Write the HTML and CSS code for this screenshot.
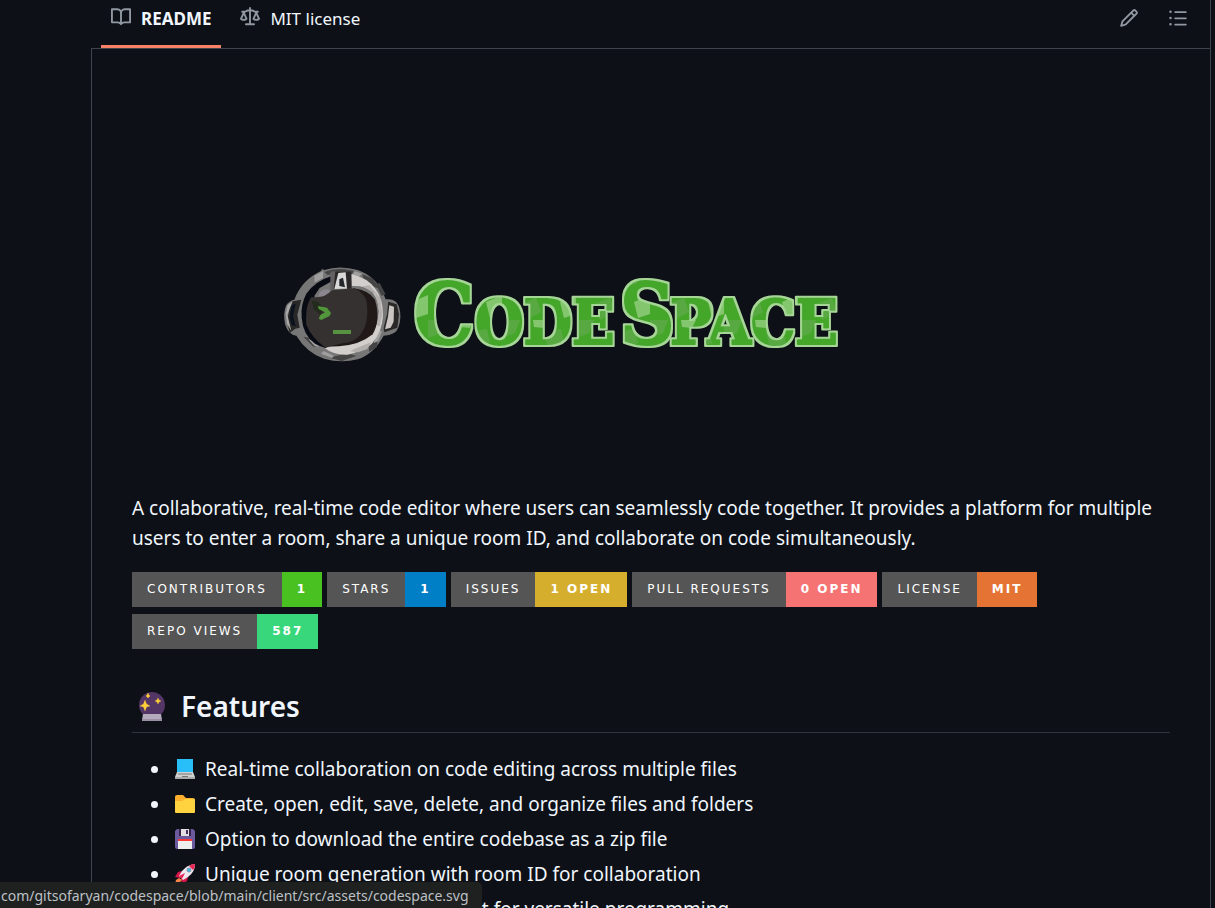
FILE: index.html
```html
<!DOCTYPE html>
<html lang="en">
<head>
<meta charset="utf-8">
<meta name="viewport" content="width=device-width, initial-scale=1">
<title>CodeSpace README</title>
<link rel="stylesheet" href="styles.css">
</head>
<body>
<main class="panel">
  <header class="bar">
    <nav class="tabs">
      <a class="tab tab-active" href="#readme">
        <svg class="icon" viewBox="0 0 16 16" aria-hidden="true"><path d="M0 1.75A.75.75 0 0 1 .75 1h4.253c1.227 0 2.317.59 3 1.501A3.743 3.743 0 0 1 11.006 1h4.245a.75.75 0 0 1 .75.75v10.5a.75.75 0 0 1-.75.75h-4.507a2.25 2.25 0 0 0-1.591.659l-.622.621a.75.75 0 0 1-1.06 0l-.622-.621A2.25 2.25 0 0 0 5.258 13H.75a.75.75 0 0 1-.75-.75Zm7.251 10.324.004-5.073-.002-2.253A2.25 2.25 0 0 0 5.003 2.5H1.5v9h3.757a3.75 3.75 0 0 1 1.994.574ZM8.755 4.75l-.004 7.322a3.752 3.752 0 0 1 1.992-.572H14.5v-9h-3.495a2.25 2.25 0 0 0-2.25 2.25Z"/></svg>
        <span>README</span>
      </a>
      <a class="tab" href="#license">
        <svg class="icon" viewBox="0 0 16 16" aria-hidden="true"><path d="M8.75.75V2h.985c.304 0 .603.08.867.231l1.29.736c.038.022.08.033.124.033h2.234a.75.75 0 0 1 0 1.5h-.427l2.111 4.692a.75.75 0 0 1-.154.838l-.53-.53.529.531-.001.002-.002.002-.006.006-.006.005-.01.01-.045.04c-.21.176-.441.327-.686.45C14.556 10.78 13.88 11 13 11a4.498 4.498 0 0 1-2.023-.454 3.544 3.544 0 0 1-.686-.45l-.045-.04-.016-.015-.006-.006-.004-.004v-.001a.75.75 0 0 1-.154-.838L12.178 4.5h-.162c-.305 0-.604-.079-.868-.231l-1.29-.736a.245.245 0 0 0-.124-.033H8.75V13h2.5a.75.75 0 0 1 0 1.5h-6.5a.75.75 0 0 1 0-1.5h2.5V3.5h-.984a.245.245 0 0 0-.124.033l-1.289.737c-.265.15-.564.23-.869.23h-.162l2.112 4.692a.75.75 0 0 1-.154.838l-.53-.53.529.531-.001.002-.002.002-.006.006-.016.015-.045.04c-.21.176-.441.327-.686.45C4.556 10.78 3.88 11 3 11a4.498 4.498 0 0 1-2.023-.454 3.544 3.544 0 0 1-.686-.45l-.045-.04-.016-.015-.006-.006-.004-.004v-.001a.75.75 0 0 1-.154-.838L2.178 4.5H1.75a.75.75 0 0 1 0-1.5h2.234a.249.249 0 0 0 .125-.033l1.288-.737c.265-.15.564-.23.869-.23h.984V.75a.75.75 0 0 1 1.5 0Zm2.945 8.477c.285.135.718.273 1.305.273s1.02-.138 1.305-.273L13 6.327Zm-10 0c.285.135.718.273 1.305.273s1.02-.138 1.305-.273L3 6.327Z"/></svg>
        <span>MIT license</span>
      </a>
    </nav>
    <div class="tools">
      <button class="tool" type="button" aria-label="Edit file"><svg class="icon" viewBox="0 0 16 16" aria-hidden="true"><path d="M11.013 1.427a1.75 1.75 0 0 1 2.474 0l1.086 1.086a1.75 1.75 0 0 1 0 2.474l-8.61 8.61c-.21.21-.47.364-.756.445l-3.251.93a.75.75 0 0 1-.927-.928l.929-3.25c.081-.286.235-.547.445-.758l8.61-8.61Zm.176 4.823L9.75 4.81l-6.286 6.287a.253.253 0 0 0-.064.108l-.558 1.953 1.953-.558a.253.253 0 0 0 .108-.064Zm1.238-3.763a.25.25 0 0 0-.354 0L10.811 3.75l1.439 1.44 1.263-1.263a.25.25 0 0 0 0-.354Z"/></svg></button>
      <button class="tool" type="button" aria-label="Outline"><svg class="icon" viewBox="0 0 16 16" aria-hidden="true"><path d="M5.75 2.5h8.5a.75.75 0 0 1 0 1.5h-8.5a.75.75 0 0 1 0-1.5Zm0 5h8.5a.75.75 0 0 1 0 1.5h-8.5a.75.75 0 0 1 0-1.5Zm0 5h8.5a.75.75 0 0 1 0 1.5h-8.5a.75.75 0 0 1 0-1.5ZM2 14a1 1 0 1 1 0-2 1 1 0 0 1 0 2Zm1-6a1 1 0 1 1-2 0 1 1 0 0 1 2 0ZM2 4a1 1 0 1 1 0-2 1 1 0 0 1 0 2Z"/></svg></button>
    </div>
  </header>

  <article class="readme" id="readme">
    <a class="hero" href="#codespace">
      <svg class="logo" viewBox="0 0 570 110" role="img" aria-label="CodeSpace">
        <defs>
          <pattern id="paint" width="74" height="60" patternUnits="userSpaceOnUse">
            <rect width="74" height="60" fill="#45a729"/>
            <path d="M0 0h18l-5 13-13 5ZM42 12l17-3 3 14-16 5ZM18 44l16-6 5 14-15 8Z" fill="#58a943"/>
            <path d="M58 42l16-7v19l-12 4ZM31 0h15l-4 8-10-1Z" fill="#83c66e"/>
          </pattern>
          <filter id="rim" x="-5%" y="-10%" width="110%" height="120%">
            <feMorphology in="SourceAlpha" operator="dilate" radius="2" result="wide"/>
            <feFlood flood-color="#a5d695"/>
            <feComposite in2="wide" operator="in" result="edge"/>
            <feMerge><feMergeNode in="edge"/><feMergeNode in="SourceGraphic"/></feMerge>
          </filter>
        </defs>
        <!-- helmet, drawn on a grid three times finer -->
        <g transform="translate(-5 -5) scale(.3333)">
          <path d="M58 134Q80 75 138 48l3-6 7 3q45-15 100 0 60 20 84 88 32-4 40 22 9 30-1 60-8 26-45 27-30 55-78 71-50 12-101-2-52-18-83-69-24-2-34-35-6-35 3-55 8-14 25-18Z" fill="#777676"/>
          <path d="M148 51q30-12 62-8l26 4-6 12-50-4-22 5ZM262 58l30 12 27 34-20-8-34-25ZM302 88l12-4 18 34-12 5ZM282 276l28-33-4 33-24 15ZM174 305l44-10 26 8-44 15-34-9ZM85 245l25 5 18 23-13 2Z" fill="#454444"/>
          <path d="M118 62l27-14-1 21-25 13ZM100 252l22 6 10 18-14-4ZM240 49l22 7-10 8-19-6ZM146 288l30 14-4 7-34-13ZM307 226l14 3-12 30-13 5Z" fill="#a09f9f"/>
          <path d="M230 57q50 12 72 46 22 30 22 76 0 48-34 88-30 23-72 32-42 2-68-19l28-9 60-7q54-12 72-70 8-51-18-84-20-19-62-17Z" fill="#d2cecb"/>
          <path d="M262 94l22-3 31 37 7 48-8 38-9-3 8-48-13-47-25-15ZM238 282l50-20-11 20-27 10-24-3Z" fill="#b3afad"/>
          <path d="M172 62Q120 78 94 116 76 150 80 188q4 52 40 78 18 10 32 13l16-12-20-34-30-110 16-24 36-20Z" fill="#080b13"/>
          <path d="M236 100q48 7 64 34 18 60-7 104-38 32-101 36l-44 1Z" fill="#201918"/>
          <path d="M131 125q0-18 20-22 12-2 18 8l-22 15Z" fill="#8b858d"/>
          <path d="M110 126q38 6 60-20l68-6q34 16 38 46 6 60-18 91-20 26-56 28l-52 12q-40-29-56-68-4-60 16-83Z" fill="#353130"/>
          <path d="M181 50h47l2 51-60 2 5-53Z" fill="#292727"/>
          <path d="M166 50l15-2-5 53-10 7Z" fill="#626061"/>
          <path d="M190 54l22-2 4 49-38 1Z" fill="#d9d8d8"/>
          <path d="M193 73l11-5 6 29-17-4Z" fill="#22252a"/>
          <path d="M53 139l26-5-12 45 7 39-13 3-17 13q-15-50 9-95Z" fill="#282828"/>
          <path d="M38 150l14-10-15 39 12 49-13-22-4-30Z" fill="#aaa"/>
          <path d="M51 151l11-5-8 37 8 31-12-4-6-25Z" fill="#09121e"/>
          <path d="M330 137l35 11 7 30-5 40-39 14-4-20 8-38Z" fill="#292827"/>
          <path d="M343 151l14 4-1 45-9 18-17 5 9-38Z" fill="#cac5c2"/>
          <path d="M328 135l12 1-4 42-13 52-6-6 10-45Z" fill="#777"/>
          <path d="M110 137l18 3 13 14-3 27-21-18Z" fill="#232b1c"/>
          <path d="M129 153l27 5 12 16-4 9-25 12-8-4 5-11 14-8-19-10Z" fill="#51963a"/>
          <path d="M174 225h54v12h-54Z" fill="#579240"/>
        </g>
        <g class="wordmark" filter="url(#rim)">
          <text class="cap" x="134" y="84">C</text>
          <text class="small" x="195" y="84">ODE</text>
          <text class="cap" x="340" y="84">S</text>
          <text class="small" x="390" y="84">PACE</text>
        </g>
      </svg>
    </a>

    <p class="intro">A collaborative, real-time code editor where users can seamlessly code together. It provides a platform for multiple users to enter a room, share a unique room ID, and collaborate on code simultaneously.</p>

    <div class="badges">
      <a class="badge" href="#contributors"><span>CONTRIBUTORS</span><b class="green">1</b></a>
      <a class="badge" href="#stars"><span>STARS</span><b class="blue">1</b></a>
      <a class="badge" href="#issues"><span>ISSUES</span><b class="gold">1 OPEN</b></a>
      <a class="badge" href="#pulls"><span>PULL REQUESTS</span><b class="coral">0 OPEN</b></a>
      <a class="badge" href="#license"><span>LICENSE</span><b class="orange">MIT</b></a>
      <a class="badge" href="#views"><span>REPO VIEWS</span><b class="mint">587</b></a>
    </div>

    <h2 class="heading">
      <svg class="orb" viewBox="0 0 30 30" aria-hidden="true">
        <circle cx="15" cy="14" r="13" fill="#533566"/>
        <path d="M6 23h18l1 6a1 1 0 0 1-1 1H6a1 1 0 0 1-1-1Z" fill="#b4acbc"/><path d="M5 28h20v2H5Z" fill="#998ea2"/>
        <path d="M8 9l1.500 4 3.500 2-3.500 1-1.500 4-1.500-4-3.500-1 3.500-2ZM21 7l1 2 2 1-2 1-1 2-1-2-2-1 2-1ZM11 2l1 2 1 1-1 1-1 1-1-1-1-1 1-1Z" fill="#ffce38" stroke="#ffce38" stroke-width=".3"/>
      </svg>
      <span>Features</span>
    </h2>

    <ul class="features">
      <li><svg class="emoji" viewBox="0 0 20 20" aria-hidden="true"><path d="M2 0h16v13H2Z" fill="#28bff9"/><path d="M2 13h16l2 5H0Z" fill="#d0d0d0"/><path d="M3 14h14v2H3Z" fill="#a4a4a4"/><path d="M7 17h6v1H7Z" fill="#777"/><path d="M0 18h20v2H0Z" fill="#aaa"/></svg><span>Real-time collaboration on code editing across multiple files</span></li>
      <li><svg class="emoji" viewBox="0 0 20 20" aria-hidden="true"><path d="M0 3a2 2 0 0 1 2-2h6l3 3h7a2 2 0 0 1 2 2v6H0Z" fill="#fcae2d"/><path d="M0 7h7l3-2h9a1 1 0 0 1 1 1v12a1 1 0 0 1-1 1H1a1 1 0 0 1-1-1Z" fill="#ffd23f"/></svg><span>Create, open, edit, save, delete, and organize files and folders</span></li>
      <li><svg class="emoji" viewBox="0 0 20 20" aria-hidden="true"><path d="M2 0h16l2 2v16a2 2 0 0 1-2 2H2a2 2 0 0 1-2-2V2Z" fill="#6b5a9d"/><path d="M4 0h12v7H4Z" fill="#352448"/><path d="M6 0h8v7H6Z" fill="#e1dfe2"/><path d="M11 1h2v4h-2Z" fill="#4a3161"/><path d="M3 10h14v10H3Z" fill="#eee"/><path d="M3 10h14v2H3Z" fill="#fc3737"/></svg><span>Option to download the entire codebase as a zip file</span></li>
      <li><svg class="emoji" viewBox="0 0 20 20" aria-hidden="true"><path d="M7 7l-4 1-3 5 5 1ZM13 13l-1 4-5 3-1-6Z" fill="#d5174b"/><path d="M20 0q0 8-7 13l-5 3-4-4 3-5Q12 1 20 0Z" fill="#eee6ef"/><path d="M20 0q0 4-2 6l-4-4q2-2 6-2ZM4 12l6-3-3 6Z" fill="#e82555"/><circle cx="14" cy="6" r="2" fill="#45b9e8" stroke="#7693a2"/><path d="M4 14l3 2-3 3-4 1 1-4Z" fill="#f78448"/></svg><span>Unique room generation with room ID for collaboration</span></li>
      <li><svg class="emoji" viewBox="0 0 20 20" aria-hidden="true"><circle cx="10" cy="10" r="10" fill="#28bff9"/><path d="M5 2l6 2-1 5-5 2-4-3ZM13 10l5 1-4 6-3-3Z" fill="#45a729"/></svg><span>Flexible multi-language support for versatile programming</span></li>
    </ul>
  </article>
</main>
<div class="status"><span>com/gitsofaryan/codespace/blob/main/client/src/assets/codespace.svg</span></div>
</body>
</html>
```

FILE: styles.css
```css
* { box-sizing: border-box; }
html, body { height: 100%; }
body {
  margin: 0;
  overflow: hidden;
  background: #0d1017;
  color: #f0f6fc;
  font: 19px/30px "Noto Sans", "Open Sans", sans-serif;
}
a { color: inherit; text-decoration: none; }
.panel {
  min-height: 100%;
  margin: 0 4px 0 91px;
  border-right: 1px solid #3d444d;
}
.bar {
  display: flex;
  justify-content: space-between;
  height: 49px;
  padding: 0 22px 0 10px;
  border-bottom: 1px solid #3d444d;
}
.tabs { display: flex; gap: 9px; }
.tab {
  display: flex;
  gap: 10px;
  height: 48px;
  padding: 4px 10px 0;
  font-size: 17px;
}
.tab-active { border-bottom: 3px solid #f78166; font-weight: 700; }
.icon { width: 20px; height: 20px; fill: #9198a1; }
.tab .icon { margin-top: 3px; }
.tools { display: flex; gap: 29px; }
.tool { height: 36px; padding: 0; border: 0; background: none; line-height: 0; }
.readme { padding: 0 40px; border-left: 1px solid #3d444d; }
.hero { display: block; height: 444px; padding: 211px 0 0 148px; }
.logo { display: block; width: 570px; height: 110px; }
.wordmark {
  font-family: "DejaVu Serif Condensed", "DejaVu Serif", serif;
  font-weight: 700;
  fill: url(#paint);
  stroke: url(#paint);
  stroke-width: 2px;
  stroke-linejoin: round;
}
.cap { font-size: 84px; }
.small { font-size: 62px; }
.intro { margin: 0 0 19px; }
.badges { display: flex; flex-wrap: wrap; gap: 7px 5px; }
.badge {
  display: flex;
  height: 35px;
  font: 12px/35px "DejaVu Sans", sans-serif;
  letter-spacing: 2px;
  color: #fff;
}
.badge span, .badge b { padding: 0 15px; }
.badge span { background: #555; }
.badge .green { background: #49c120; }
.badge .blue { background: #007ec6; }
.badge .gold { background: #d6ae2d; }
.badge .coral { background: #f67373; }
.badge .orange { background: #e57334; }
.badge .mint { background: #38d77b; }
.heading {
  display: flex;
  align-items: center;
  gap: 14px;
  height: 54px;
  margin: 30px 0 21px;
  padding: 0 0 0 5px;
  border-bottom: 1px solid #2f353e;
  font-size: 28px;
  font-weight: 600;
}
.orb { width: 30px; height: 30px; }
.features {
  display: grid;
  gap: 5px;
  margin: 0;
  padding: 0 0 0 19px;
  list-style: none;
}
.features li { display: flex; align-items: center; }
.features li::before {
  content: "";
  width: 7px;
  height: 7px;
  margin-right: 17px;
  border-radius: 50%;
  background: #f0f6fc;
}
.emoji { width: 20px; height: 20px; margin-right: 10px; }
.status {
  position: fixed;
  bottom: 0;
  left: 0;
  height: 26px;
  padding: 0 13px 0 1px;
  border-radius: 0 5px 0 0;
  background: #1f2020;
  color: #bdc1c6;
  font-size: 14px;
  line-height: 28px;
  white-space: nowrap;
}
```
